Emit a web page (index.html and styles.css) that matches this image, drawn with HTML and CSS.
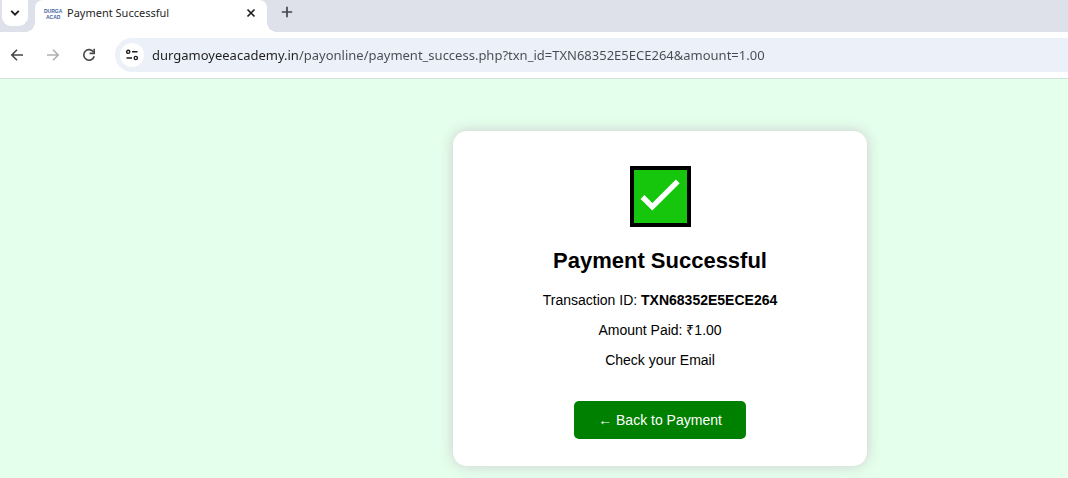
FILE: index.html
```html
<!DOCTYPE html>
<html lang="en">
<head>
  <meta charset="UTF-8">
  <title>Payment Successful</title>
  <meta name="viewport" content="width=device-width, initial-scale=1.0">
  <link rel="stylesheet" href="styles.css">
</head>
<body>
  <header class="browser">
    <div class="tab-strip">
      <button class="tab-search" type="button" aria-label="Search tabs">
        <svg width="12" height="12" viewBox="0 0 12 12"><path d="M2.2 3.8 6 7.6l3.8-3.8" fill="none" stroke="#1f1f1f" stroke-width="1.9"/></svg>
      </button>
      <div class="tab">
        <svg class="favicon" width="18" height="16" viewBox="0 0 18 16" aria-hidden="true">
          <text x="1" y="8">DURGA</text>
          <text x="3" y="14">ACAD</text>
        </svg>
        <span class="tab-title">Payment Successful</span>
        <button class="tab-close" type="button" aria-label="Close tab">
          <svg width="10" height="10" viewBox="0 0 10 10"><path d="M1.5 1.5l7 7M8.5 1.5l-7 7" fill="none" stroke="#1f1f1f" stroke-width="1.7"/></svg>
        </button>
      </div>
      <button class="new-tab" type="button" aria-label="New tab">
        <svg width="12" height="12" viewBox="0 0 12 12"><path d="M6 .8v10.4M.8 6h10.4" fill="none" stroke="#43474d" stroke-width="1.7"/></svg>
      </button>
    </div>
    <div class="toolbar">
      <button class="nav-btn" type="button" aria-label="Back">
        <svg width="14" height="14" viewBox="0 0 14 14"><path d="M13 7H2M7 1.8 1.8 7 7 12.2" fill="none" stroke="#474747" stroke-width="1.6"/></svg>
      </button>
      <button class="nav-btn" type="button" aria-label="Forward" disabled>
        <svg width="14" height="14" viewBox="0 0 14 14"><path d="M1 7h11M7 1.8 12.2 7 7 12.2" fill="none" stroke="#b0b0b0" stroke-width="1.6"/></svg>
      </button>
      <button class="nav-btn" type="button" aria-label="Reload">
        <svg width="14" height="14" viewBox="0 0 14 14"><path d="M11.6 4.2A5.3 5.3 0 1 0 12.2 8.2" fill="none" stroke="#474747" stroke-width="1.6"/><path d="M12.2.8v4.6H7.6" fill="none" stroke="#474747" stroke-width="1.6"/></svg>
      </button>
      <div class="address">
        <button class="site-info" type="button" aria-label="View site information">
          <svg width="14" height="12" viewBox="0 0 14 12" fill="none" stroke="#1f1f1f" stroke-width="1.4"><circle cx="3.2" cy="2.8" r="1.6"/><path d="M7 2.8h5.5M1.5 9h5.5"/><circle cx="10.8" cy="9" r="1.6"/></svg>
        </button>
        <input class="address-input" type="text" aria-label="Address" spellcheck="false" value="durgamoyeeacademy.in/payonline/payment_success.php?txn_id=TXN68352E5ECE264&amp;amount=1.00">
      </div>
    </div>
  </header>

  <main class="page">
    <div class="card">
      <svg class="check" width="61" height="61" viewBox="0 0 61 61" role="img" aria-label="Success">
        <rect x="2" y="2" width="57" height="57" fill="#16c60c" stroke="#000" stroke-width="4"/>
        <path d="M12.5 31l9.8 9.8 25.5-25.5" fill="none" stroke="#fff" stroke-width="5.4"/>
      </svg>
      <h2>Payment Successful</h2>
      <p>Transaction ID: <strong>TXN68352E5ECE264</strong></p>
      <p>Amount Paid: ₹1.00</p>
      <p>Check your Email</p>
      <a class="btn" href="#">← Back to Payment</a>
    </div>
  </main>
</body>
</html>
```

FILE: styles.css
```css
* { box-sizing: border-box; }
body {
  margin: 0;
  min-height: 100vh;
  display: flex;
  flex-direction: column;
  background: #e4ffec;
  font-family: "Liberation Sans", Arial, sans-serif;
}
button {
  display: flex;
  align-items: center;
  justify-content: center;
  padding: 0;
  border: none;
  background: none;
}

/* Browser bar */
.browser {
  background: #fff;
  border-bottom: 1px solid #cfe3d6;
  font-family: "Noto Sans", "Open Sans", sans-serif;
}
.tab-strip {
  display: flex;
  height: 32px;
  padding-left: 2px;
  background: #dee1ea;
}
.tab-search {
  width: 26px;
  height: 26px;
  border-radius: 0 0 9px 9px;
  background: #fff;
}
.tab {
  position: relative;
  display: flex;
  align-items: center;
  width: 232px;
  margin-left: 7px;
  padding: 0 10px 6px 8px;
  background: #fff;
  border-radius: 8px 8px 0 0;
}
.tab::before,
.tab::after {
  content: "";
  position: absolute;
  bottom: 0;
  width: 10px;
  height: 10px;
}
.tab::before {
  right: 100%;
  background: radial-gradient(circle at 0 0, #dee1ea 10px, #fff 10px);
}
.tab::after {
  left: 100%;
  background: radial-gradient(circle at 100% 0, #dee1ea 10px, #fff 10px);
}
.favicon {
  overflow: visible;
  font-family: "Liberation Sans", Arial, sans-serif;
  font-size: 5px;
  font-weight: 700;
  fill: #3f669f;
}
.tab-title {
  flex: 1;
  margin-left: 6px;
  font-size: 11px;
  line-height: 16px;
  color: #1f1f1f;
}
.tab-close { width: 12px; height: 16px; }
.new-tab {
  width: 20px;
  height: 24px;
  margin-left: 10px;
}
.toolbar {
  display: flex;
  align-items: center;
  height: 46px;
  padding-left: 7px;
}
.nav-btn {
  width: 20px;
  height: 24px;
  margin-right: 16px;
}
.address {
  flex: 1;
  display: flex;
  align-items: center;
  height: 34px;
  padding-left: 5px;
  background: #ecf0f9;
  border-radius: 17px 0 0 17px;
}
.site-info {
  width: 24px;
  height: 24px;
  border-radius: 50%;
  background: #fff;
}
.address-input {
  flex: 1;
  min-width: 0;
  margin-left: 8px;
  padding: 0;
  border: none;
  outline: none;
  font: 13px/20px "Noto Sans", "Open Sans", sans-serif;
  color: transparent;
  /* host part darker than the path */
  background: linear-gradient(90deg, #1f1f1f 147px, #474a50 147px);
  background-clip: text;
  -webkit-background-clip: text;
}

/* Page */
.page {
  flex: 1;
  display: flex;
  justify-content: center;
  align-items: flex-start;
  padding: 52px 0 12px 252px;
}
.card {
  width: 414px;
  padding: 35px 36px 27px;
  background: #fff;
  border-radius: 14px;
  box-shadow: 0 0 14px #ccc;
  text-align: center;
  color: #000;
}
.check { display: block; margin: 0 auto; }
.card h2 {
  margin: 21px 0 18px;
  font-size: 22px;
  line-height: 26px;
}
.card p {
  margin: 0 0 13px;
  font-size: 14px;
  line-height: 17px;
}
.btn {
  display: inline-block;
  margin-top: 19px;
  padding: 11px 24px;
  background: #008000;
  color: #fff;
  border-radius: 5px;
  font-size: 14px;
  line-height: 16px;
  text-decoration: none;
  vertical-align: top;
}
```
